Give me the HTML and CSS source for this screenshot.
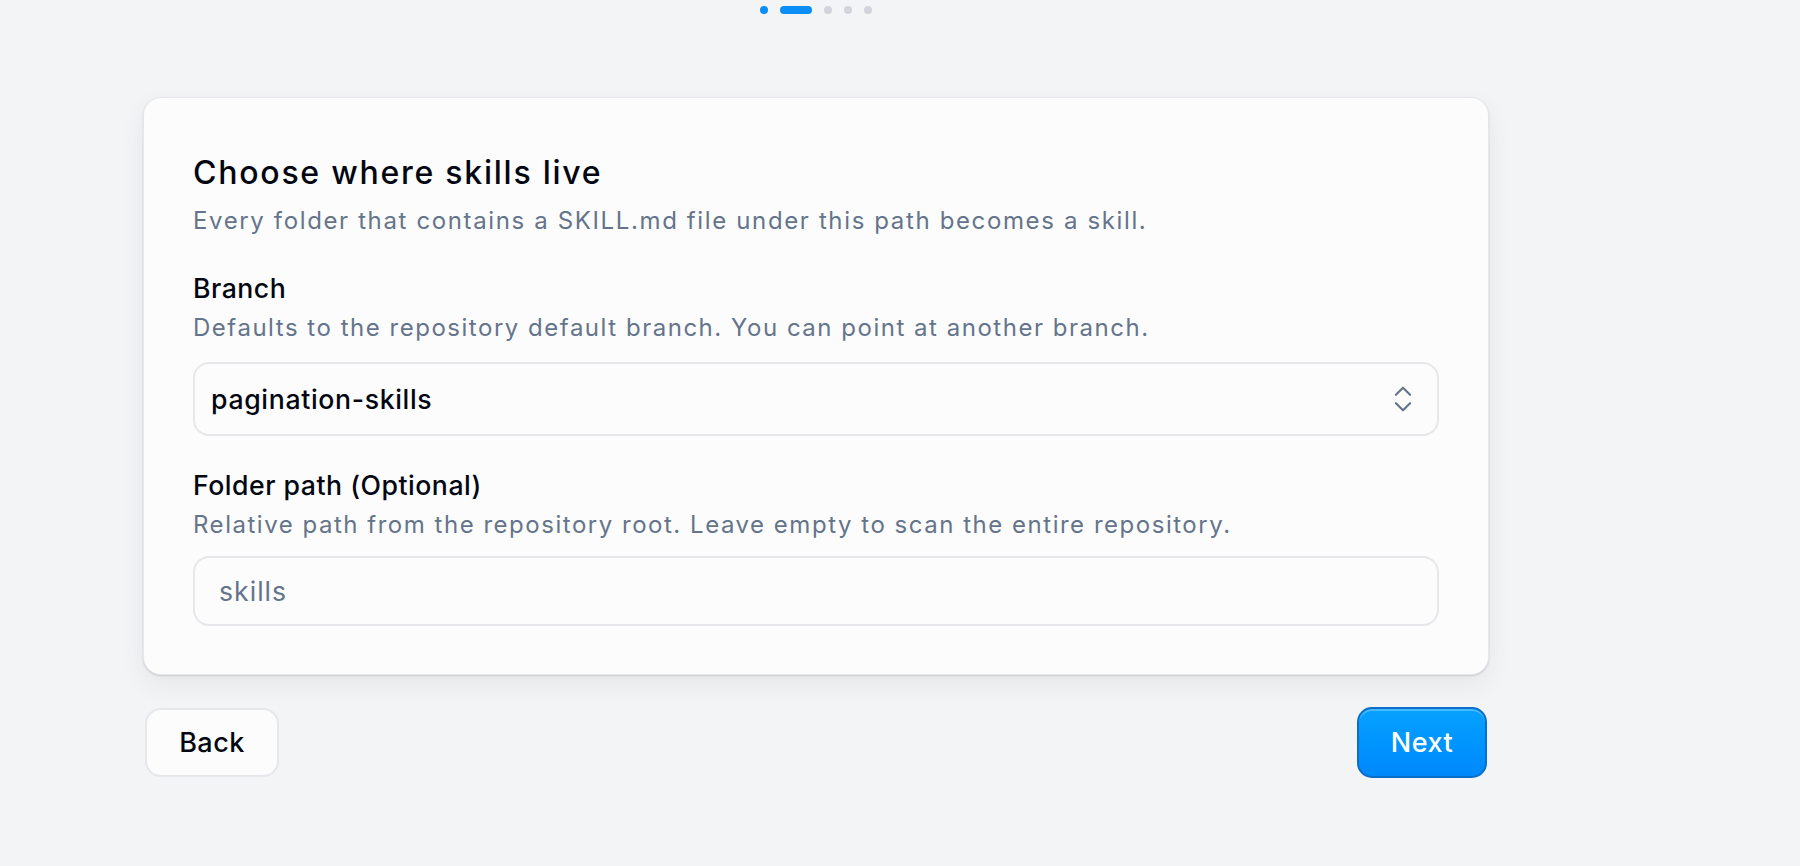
FILE: index.html
```html
<!DOCTYPE html>
<html>
  <head>
    <title>Add skills - Choose where skills live</title>
    <meta charset="utf-8" />
    <meta name="viewport" content="width=device-width, initial-scale=1" />
    <link rel="stylesheet" href="styles.css">
  </head>
  <body>
    <div class="wizard">
      <div class="steps">
        <span class="dot done"></span>
        <span class="dot current"></span>
        <span class="dot"></span>
        <span class="dot"></span>
        <span class="dot"></span>
      </div>

      <div class="card">
        <h1>Choose where skills live</h1>
        <p class="lead">Every folder that contains a SKILL.md file under this path becomes a skill.</p>

        <div class="field first">
          <label>Branch</label>
          <p class="hint">Defaults to the repository default branch. You can point at another branch.</p>
          <div class="select">
            <span>pagination-skills</span>
            <svg width="34" height="34" viewBox="0 0 24 24" fill="none" stroke="#64748b" stroke-width="1.5" stroke-linecap="round" stroke-linejoin="round">
              <path d="m7 15 5 5 5-5" />
              <path d="m7 9 5-5 5 5" />
            </svg>
          </div>
        </div>

        <div class="field">
          <label>Folder path (Optional)</label>
          <p class="hint">Relative path from the repository root. Leave empty to scan the entire repository.</p>
          <input class="input" type="text" placeholder="skills" />
        </div>
      </div>

      <div class="actions">
        <button class="btn">Back</button>
        <button class="btn primary">Next</button>
      </div>
    </div>
  </body>
</html>
```

FILE: styles.css
```css
body {
  margin: 0;
  background: #f3f4f6;
  font-family: Inter, "Noto Sans", sans-serif;
  color: #030712;
}
.wizard {
  width: 1346px;
  margin-left: 143px;
}
.steps {
  display: flex;
  justify-content: center;
  align-items: center;
  gap: 12px;
  padding-top: 6px;
  margin-bottom: 83px;
}
.dot {
  width: 8px;
  height: 8px;
  border-radius: 4px;
  background: #d1d5db;
}
.dot.done {
  background: #0a8ef5;
}
.dot.current {
  width: 32px;
  background: #0a8ef5;
}
.card {
  background: #fcfcfc;
  border: 1px solid #e5e7eb;
  border-radius: 18px;
  padding: 55px 49px 48px;
  box-shadow: 0 1px 2px rgba(0, 0, 0, 0.14), 0 10px 28px rgba(0, 0, 0, 0.06);
}
h1 {
  margin: 0;
  font-size: 32px;
  line-height: 40px;
  font-weight: 500;
  letter-spacing: 1.75px;
  color: #030712;
}
.lead {
  margin: 12px 0 0;
  font-size: 24px;
  line-height: 32px;
  letter-spacing: 1.63px;
  color: #64748b;
}
.field {
  margin-top: 31px;
}
.field.first {
  margin-top: 33px;
}
label {
  display: block;
  font-size: 26.67px;
  line-height: 36px;
  font-weight: 500;
  letter-spacing: 0.5px;
  color: #030712;
}
.hint {
  margin: 6px 0 0;
  font-size: 24px;
  line-height: 32px;
  letter-spacing: 1.52px;
  color: #64748b;
}
.select {
  margin-top: 18px;
  height: 74px;
  box-sizing: border-box;
  border: 2px solid #e6e7eb;
  border-radius: 16px;
  background: #fcfcfc;
  display: flex;
  align-items: center;
  justify-content: space-between;
  padding: 0 17px 0 16px;
  font-size: 26.67px;
  font-weight: 500;
  letter-spacing: 0.65px;
  color: #030712;
}
.input {
  display: block;
  margin-top: 15px;
  width: 100%;
  height: 70px;
  box-sizing: border-box;
  border: 2px solid #e6e7eb;
  border-radius: 16px;
  background: #fcfcfc;
  padding: 0 24px;
  font-family: inherit;
  font-size: 26.67px;
  letter-spacing: 1px;
  color: #030712;
  outline: none;
}
.input::placeholder {
  color: #64748b;
}
.actions {
  display: flex;
  justify-content: space-between;
  align-items: center;
  margin-top: 32px;
  padding: 0 2px;
}
.btn {
  display: flex;
  align-items: center;
  justify-content: center;
  height: 69px;
  width: 134px;
  box-sizing: border-box;
  border: 2px solid #e6e7eb;
  border-radius: 16px;
  background: #fcfcfc;
  font-family: inherit;
  font-size: 27px;
  font-weight: 500;
  letter-spacing: 0.5px;
  color: #030712;
}
.btn.primary {
  height: 71px;
  width: 130px;
  border: 2px solid #0b6ec8;
  border-radius: 15px;
  background: linear-gradient(#08a2ff, #0095ff 50%, #0088fb);
  box-shadow: inset 0 2px 0 rgba(255, 255, 255, 0.25);
  color: #ffffff;
}
```
